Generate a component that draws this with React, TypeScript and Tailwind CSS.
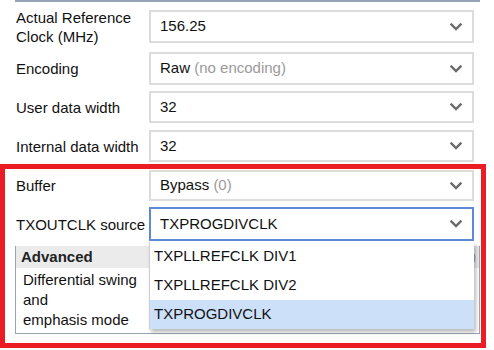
import React from "react";

const Chevron = () => (
  <svg width="12" height="8" viewBox="0 0 12 8" className="shrink-0">
    <path d="M1.5 1.5 L6 6 L10.5 1.5" fill="none" stroke="#6b6b6b" strokeWidth="2.4" strokeLinecap="square" />
  </svg>
);

function Select({
  value,
  hint,
  active,
  h = "h-[33px]",
}: {
  value: string;
  hint?: string;
  active?: boolean;
  h?: string;
}) {
  return (
    <div
      className={`shrink-0 w-[325px] ${h} flex items-center justify-between pl-[9px] pr-[10px] bg-white border-2 ${
        active ? "border-[#5d8ad6]" : "border-[#dcdcdc]"
      }`}
    >
      <span className="text-[15px] text-[#111] whitespace-nowrap">
        {value}
        {hint && <span className="text-[#9a9a9a]"> {hint}</span>}
      </span>
      <Chevron />
    </div>
  );
}

function Row({
  label,
  children,
  mt,
}: {
  label: React.ReactNode;
  children: React.ReactNode;
  mt: string;
}) {
  return (
    <div className={`flex items-center h-fit ${mt}`}>
      <div className="shrink-0 w-[149px] h-0 flex items-center pl-[16px] text-[15px] leading-[19px] text-[#111] whitespace-nowrap">
        <div>{label}</div>
      </div>
      {children}
    </div>
  );
}

export default function App() {
  return (
    <div
      className="relative w-[494px] h-[350px] bg-white overflow-hidden"
      style={{ fontFamily: '"Liberation Sans", Arial, sans-serif' }}
    >
      <div className="ml-[15px] w-[465px] h-[2px] bg-[#97a3b8]" />
      <Row mt="mt-[8px]" label={<>Actual Reference<br />Clock (MHz)</>}>
        <Select value="156.25" />
      </Row>
      <Row mt="mt-[9px]" label="Encoding">
        <Select value="Raw" hint="(no encoding)" />
      </Row>
      <Row mt="mt-[6px]" label="User data width">
        <Select value="32" h="h-[32px]" />
      </Row>
      <Row mt="mt-[7px]" label="Internal data width">
        <Select value="32" h="h-[32px]" />
      </Row>
      <Row mt="mt-[8px]" label="Buffer">
        <Select value="Bypass" hint="(0)" h="h-[31px]" />
      </Row>
      <Row mt="mt-[6px]" label="TXOUTCLK source">
        <Select value="TXPROGDIVCLK" active h="h-[34px]" />
      </Row>

      <div className="ml-[15px] mt-[5px] w-[465px] border-l border-r border-b border-[#9aa4b6]">
        <div className="h-[22px] bg-[#ebebeb] flex items-center justify-between pl-[5px] pr-[3px]">
          <span className="text-[15px] font-bold text-[#222]">Advanced</span>
          <span className="text-[13px] text-[#999]">)</span>
        </div>
        <div className="pl-[7px] pt-[2px] pb-[3px] text-[15px] leading-[20px] text-[#111]">
          Differential swing
          <br />
          and
          <br />
          emphasis mode
        </div>
      </div>

      <div className="absolute left-[149px] top-[242px] w-[325px] bg-white border-l border-[#cfcfcf] shadow-[2px_3px_4px_rgba(0,0,0,0.28)]">
        <div className="h-[29px] flex items-center pl-[4px] text-[15px] text-[#111]">TXPLLREFCLK DIV1</div>
        <div className="h-[29px] flex items-center pl-[4px] text-[15px] text-[#111]">TXPLLREFCLK DIV2</div>
        <div className="h-[29px] flex items-center pl-[4px] text-[15px] text-[#111] bg-[#cde0fa]">TXPROGDIVCLK</div>
      </div>

      <div className="absolute left-0 top-[164px] w-[486px] h-[184px] border-[5px] border-[#ec1c24] pointer-events-none" />
    </div>
  );
}
